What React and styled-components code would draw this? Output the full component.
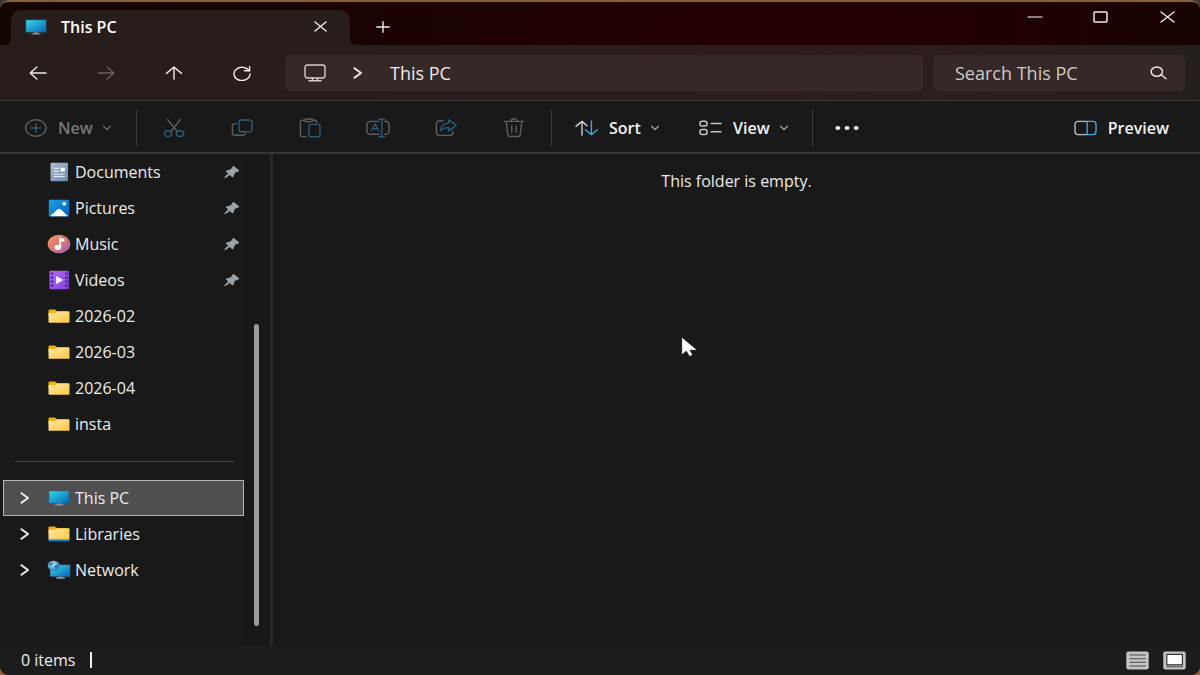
import React from "react";
import styled, { createGlobalStyle } from "styled-components";

const Global = createGlobalStyle`
  * { box-sizing: border-box; }
  body { margin: 0; background: linear-gradient(#3a3634 0%, #3a3634 50%, #8a6038 100%); }
  button, input { font: inherit; color: inherit; border: 0; background: none; padding: 0; margin: 0; }
  svg { display: block; flex: none; }
`;

const Window = styled.div`
  display: flex;
  flex-direction: column;
  min-height: 100vh;
  overflow: hidden;
  border-top: 2px solid #8a6038;
  border-radius: 9px;
  background: #191919;
  color: #ececec;
  font-family: "Open Sans", "Noto Sans", sans-serif;
  font-size: 16px;
  line-height: 20px;
`;

const TitleBar = styled.header`
  display: flex;
  height: 43px;
  padding-left: 11px;
  background: linear-gradient(90deg, #150500 0%, #1b0300 32%, #240002 66%, #1f0100 85%, #170400 100%);
`;

const Tab = styled.div`
  position: relative;
  display: flex;
  align-items: center;
  width: 339px;
  margin-top: 8px;
  padding: 0 20px 2px 14px;
  border-radius: 10px 10px 0 0;
  background: #271d1b;
  font-weight: 600;
  &::before, &::after {
    content: "";
    position: absolute;
    bottom: 0;
    width: 5px;
    height: 5px;
  }
  &::before { right: 100%; background: radial-gradient(circle at 0 0, transparent 4px, #271d1b 5px); }
  &::after { left: 100%; background: radial-gradient(circle at 100% 0, transparent 4px, #271d1b 5px); }
`;

const TabLabel = styled.span`
  flex: 1;
  margin-left: 14px;
  color: #fff;
`;

const TabButton = styled.button`
  display: grid;
  place-items: center;
  width: 20px;
  height: 32px;
`;

const NewTab = styled(TabButton)`
  width: 66px;
  height: 50px;
`;

const WindowButtons = styled.div`
  display: flex;
  margin-left: auto;
`;

const WindowButton = styled.button`
  display: grid;
  place-items: center;
  width: 66px;
  height: 30px;
`;

const NavBar = styled.nav`
  display: flex;
  align-items: center;
  height: 55px;
  padding: 0 15px 0 4px;
  background: linear-gradient(90deg, #271d1b 0%, #291d1c 30%, #301c1d 65%, #2c1e1d 85%, #251f1c 100%);
`;

const NavButton = styled.button`
  display: grid;
  place-items: center;
  width: 68px;
  height: 36px;
  color: ${(p) => (p.disabled ? "#6a615f" : "#eeeaea")};
`;

const Field = styled.div`
  display: flex;
  align-items: center;
  height: 36px;
  border-radius: 5px;
  background: #362827;
  font-size: 18px;
`;

const Address = styled(Field)`
  flex: 1;
  margin: 0 11px 0 9px;
  padding-left: 19px;
  gap: 27px;
`;

const Search = styled(Field)`
  width: 251px;
  padding: 0 18px 0 21px;
  background: #352927;
  input {
    flex: 1;
    min-width: 0;
    outline: 0;
  }
  input::placeholder { color: #cfc8c6; opacity: 1; }
`;

const Toolbar = styled.div`
  display: flex;
  align-items: center;
  height: 54px;
  padding-top: 2px;
  border-top: 1px solid #3d3938;
  border-bottom: 2px solid #353535;
  font-weight: 600;
`;

const Command = styled.button`
  display: flex;
  align-items: center;
  gap: 11px;
  height: 36px;
  width: ${(p) => p.$width}px;
  padding-left: 23px;
  color: ${(p) => (p.disabled ? "#777" : "#f2f2f2")};
`;

const CommandText = styled.span`
  display: flex;
  align-items: center;
  gap: 9px;
`;

const IconCommand = styled.button`
  display: grid;
  place-items: center;
  width: 68px;
  height: 36px;
`;

const Preview = styled(Command)`
  width: auto;
  margin-left: auto;
  padding-right: 31px;
`;

const Divider = styled.span`
  width: 1px;
  height: 36px;
  margin: 0 ${(p) => p.$after || 0}px 0 ${(p) => p.$before || 0}px;
  background: #3b3b3b;
`;

const Body = styled.div`
  display: flex;
  flex: 1;
`;

const Sidebar = styled.aside`
  display: flex;
  width: 273px;
  padding-left: 3px;
  border-right: 3px solid #292929;
`;

const Tree = styled.ul`
  flex: 1;
  margin: 0;
  padding: 0;
  list-style: none;
`;

const Row = styled.a`
  display: flex;
  align-items: center;
  height: 36px;
  padding-right: 3px;
  border: 1px solid ${(p) => (p.$selected ? "#b4b4b4" : "transparent")};
  background: ${(p) => (p.$selected ? "#4f4f4f" : "transparent")};
  color: #ececec;
  text-decoration: none;
`;

const Expander = styled.span`
  display: grid;
  place-items: center;
  width: 41px;
`;

const RowIcon = styled.span`
  display: grid;
  place-items: center;
  width: 24px;
  margin: 0 4px 0 2px;
`;

const RowLabel = styled.span`
  flex: 1;
`;

const Separator = styled.li`
  height: 38px;
  padding: 19px 10px 0 12px;
  &::after {
    content: "";
    display: block;
    height: 1px;
    background: #444;
  }
`;

const ScrollTrack = styled.div`
  display: flex;
  width: 26px;
  padding: 170px 11px 19px 10px;
  background: #181818;
`;

const ScrollThumb = styled.span`
  flex: 1;
  border-radius: 3px;
  background: #9b9b9b;
`;

const Content = styled.main`
  position: relative;
  flex: 1;
  padding-top: 17px;
  text-align: center;
  p { margin: 0; }
`;

const Pointer = styled.svg`
  position: absolute;
  left: 44%;
  top: 182px;
`;

const StatusBar = styled.footer`
  display: flex;
  align-items: center;
  height: 30px;
  padding: 0 14px 0 21px;
  background: #1c1c1c;
`;

const Caret = styled.span`
  width: 2px;
  height: 16px;
  margin-left: 15px;
  background: #eee;
`;

const Views = styled.div`
  display: flex;
  gap: 14px;
  margin-left: auto;
`;

function Svg({ w, h, children, ...rest }) {
  return (
    <svg width={w} height={h} viewBox={`0 0 ${w} ${h}`} fill="none" stroke="currentColor" strokeWidth="1.4"
      strokeLinecap="round" strokeLinejoin="round" aria-hidden="true" {...rest}>
      {children}
    </svg>
  );
}

const Chevron = () => (
  <Svg w={10} h={6} stroke="#a0a0a0" strokeWidth="1.3"><path d="M1.5 1.2 5 4.5l3.5-3.3" /></Svg>
);
const DimChevron = () => (
  <Svg w={10} h={6} stroke="#6a6a6a" strokeWidth="1.3"><path d="M1.5 1.2 5 4.5l3.5-3.3" /></Svg>
);
const ChevronRight = () => (
  <Svg w={10} h={12} strokeWidth="2"><path d="M1.5 1.2 8 6l-6.5 4.8" /></Svg>
);
const Cross = ({ w = 14, h = 12 }) => (
  <Svg w={w} h={h}><path d={`M1 1 ${w - 1} ${h - 1}M${w - 1} 1 1 ${h - 1}`} /></Svg>
);

const HiddenDefs = styled.svg`
  position: absolute;
`;

const Gradients = () => (
  <HiddenDefs width="0" height="0" aria-hidden="true">
    <defs>
      <linearGradient id="screen" x1="0" y1="0" x2="1" y2="1"><stop offset="0" stopColor="#35d6e3" /><stop offset="1" stopColor="#0b66bf" /></linearGradient>
      <linearGradient id="folder" x1="0" y1="0" x2="1" y2="1"><stop offset="0" stopColor="#ffe9a6" /><stop offset="1" stopColor="#fdc63f" /></linearGradient>
      <linearGradient id="doc" x1="0" y1="0" x2="1" y2="1"><stop offset="0" stopColor="#aebfd3" /><stop offset="1" stopColor="#6787ab" /></linearGradient>
      <linearGradient id="pic" x1="0" y1="0" x2="1" y2="1"><stop offset="0" stopColor="#1da1ec" /><stop offset="1" stopColor="#0560b8" /></linearGradient>
      <linearGradient id="music" x1="0" y1="0" x2="1" y2="1"><stop offset="0" stopColor="#f5975a" /><stop offset=".55" stopColor="#d57379" /><stop offset="1" stopColor="#9a5bc4" /></linearGradient>
      <linearGradient id="video" x1="0" y1="0" x2="1" y2="1"><stop offset="0" stopColor="#b56cf0" /><stop offset="1" stopColor="#8040dc" /></linearGradient>
      <radialGradient id="globe" cx=".4" cy=".35" r=".7"><stop offset="0" stopColor="#d8f1fb" /><stop offset=".5" stopColor="#5daad6" /><stop offset="1" stopColor="#2c6f9f" /></radialGradient>
    </defs>
  </HiddenDefs>
);

const PcIcon = () => (
  <Svg w={22} h={16} stroke="none">
    <rect x=".6" y=".4" width="20.8" height="13.2" rx="1" fill="#29617b" />
    <rect x="1.3" y="1.2" width="19.4" height="11.7" fill="url(#screen)" />
    <path d="M8.5 13.6h5v.8h2v1.2h-9v-1.2h2z" fill="#8f9ba3" />
  </Svg>
);
const FolderIcon = () => (
  <Svg w={22} h={16} stroke="none">
    <path d="M.5 2.5a1 1 0 0 1 1-1h5.3l2 1.6H20a1 1 0 0 1 1 1V8H.5z" fill="#f3ae12" />
    <path d="M.5 4.9h6.6l2-1.2H21a.5.5 0 0 1 .5.5v9.8a.8.8 0 0 1-.8.8H1.3a.8.8 0 0 1-.8-.8z" fill="url(#folder)" />
  </Svg>
);
const LibraryIcon = () => (
  <Svg w={22} h={16} stroke="none">
    <path d="M.5 1.5a1 1 0 0 1 1-1h5.3l2 1.4H20a1 1 0 0 1 1 1V8H.5z" fill="#f3ae12" />
    <path d="M.5 3.7h6.6l2-1.2H21a.5.5 0 0 1 .5.5V14H.5z" fill="url(#folder)" />
    <path d="M.5 13.4h21v1.2a.8.8 0 0 1-.8.8H1.3a.8.8 0 0 1-.8-.8z" fill="#1277cf" />
  </Svg>
);
const DocumentIcon = () => (
  <Svg w={22} h={20} stroke="none">
    <rect x="2.5" y=".8" width="17.5" height="18.4" rx="1.3" fill="url(#doc)" />
    <path d="M5.8 6.4h5M5.8 9.4h5M5.8 12.2h11M5.8 14.6h11" stroke="#dfe8f2" strokeWidth="1.1" strokeLinecap="butt" />
    <rect x="12.5" y="5.8" width="4.4" height="3.6" rx=".6" fill="#fff" />
  </Svg>
);
const PictureIcon = () => (
  <Svg w={22} h={20} stroke="none">
    <rect x=".8" y="1.8" width="20.4" height="16.6" rx="1.2" fill="url(#pic)" />
    <path d="M2 18.2 9.8 11.3a2.2 2.2 0 0 1 2.8 0l7.5 6.9z" fill="#fff" />
    <ellipse cx="16.3" cy="5.8" rx="2" ry="1.7" fill="#fff" />
  </Svg>
);
const MusicIcon = () => (
  <Svg w={24} h={20} stroke="none">
    <ellipse cx="12" cy="10" rx="11.3" ry="9.3" fill="url(#music)" />
    <path d="M12.2 13.3V3.6l5.2 1.4v2.9l-3.2-.7v6.5" fill="#fff" />
    <ellipse cx="10.8" cy="13.5" rx="3.4" ry="2.5" fill="#fff" />
  </Svg>
);
const VideoIcon = () => (
  <Svg w={22} h={20} stroke="none">
    <rect x="1.5" y=".8" width="19.4" height="18.4" rx="1.3" fill="url(#video)" />
    <path d="M4 2.5v16M18.6 2.5v16" stroke="#4a1c8e" strokeWidth="2.4" strokeDasharray="2 2" strokeLinecap="butt" />
    <path d="M8.2 6v8l7.2-4z" fill="#fff" />
  </Svg>
);
const NetworkIcon = () => (
  <Svg w={24} h={20} stroke="none">
    <rect x="3" y="4.6" width="20.4" height="12.2" rx="1" fill="#29617b" />
    <rect x="3.6" y="5.2" width="19.2" height="11" fill="url(#screen)" />
    <path d="M11 16.8h5v.8h2v1.2H9v-1.2h2z" fill="#8f9ba3" />
    <ellipse cx="6.8" cy="5.8" rx="6" ry="5" fill="url(#globe)" />
    <path d="M2.5 3.2 5 2.4l1.5 1.4-1.8 1.6-2.4.1zM7.3 5.8l2.8-1.3 1.6 1.8-1.8 2.8-1.8-.8z" fill="#2e7cae" />
  </Svg>
);
const PinIcon = () => (
  <Svg w={16} h={14} stroke="none">
    <path d="M8.8 1.3a1 1 0 0 1 1.3 0l4.6 3.6a.9.9 0 0 1-.3 1.6l-3.4 1.2-1.5 3.9a.9.9 0 0 1-1.5.3L5.7 9.9 2 12.7l-1.7.5.5-1.5L4.2 8.5 2.2 6.7a.8.8 0 0 1 .3-1.3l4.4-1.2z" fill="#98a2a8" />
  </Svg>
);

const BLUE = "#285c7a";
const GRAY = "#5f5f5f";

const CutIcon = () => (
  <Svg w={22} h={20} stroke={GRAY}>
    <path d="M4.5 1.5 14.5 13.7M17.5 1.5 7.5 13.7" />
    <ellipse cx="5" cy="15.6" rx="3.6" ry="2.9" stroke={BLUE} /><ellipse cx="17" cy="15.6" rx="3.6" ry="2.9" stroke={BLUE} />
  </Svg>
);
const CopyIcon = () => (
  <Svg w={22} h={20} stroke={GRAY}>
    <path d="M5.3 5.6H4a2.6 2.6 0 0 0-2.6 2.6v6.5A2.6 2.6 0 0 0 4 17.3h7.6a2.8 2.8 0 0 0 2.7-1.8" />
    <rect x="8" y="2" width="13" height="11.8" rx="2.4" stroke={BLUE} />
  </Svg>
);
const PasteIcon = () => (
  <Svg w={22} h={20} stroke={GRAY}>
    <path d="M7 18.6H3.2a1.8 1.8 0 0 1-1.8-1.8V4.1a1.8 1.8 0 0 1 1.8-1.8H6M13.5 2.3h2.3a1.8 1.8 0 0 1 1.8 1.8v.6" />
    <rect x="6" y="1" width="7.6" height="2.6" rx="1.3" />
    <rect x="10" y="6.4" width="11" height="12.4" rx="1.6" stroke={BLUE} />
  </Svg>
);
const RenameIcon = () => (
  <Svg w={24} h={20} stroke={GRAY}>
    <path d="M13 16.3H4.3A3.2 3.2 0 0 1 1 13.1V6.6a3.2 3.2 0 0 1 3.3-3.2H13M18.8 3.4a3.2 3.2 0 0 1 4.2 3.2v6.5a3.2 3.2 0 0 1-4.2 3.2" />
    <path d="m5.2 13 3.9-7 3.9 7M6.5 10.8h5.2M13 1.2h5.6M15.9 1.2v17.6M13 18.8h5.6" stroke={BLUE} />
  </Svg>
);
const ShareIcon = () => (
  <Svg w={22} h={20} stroke={GRAY}>
    <path d="M8 3H4.2a2.8 2.8 0 0 0-2.8 2.8v8.8a2.8 2.8 0 0 0 2.8 2.8h11a2.8 2.8 0 0 0 2.8-2.8v-1.4" />
    <path d="M13.8 1.8v3.1C8.6 5.3 6 8.4 5.4 12.7c2-2.1 4.6-3.2 8.4-3.1v3.3l7.5-5.5z" stroke={BLUE} />
  </Svg>
);
const TrashIcon = () => (
  <Svg w={22} h={20} stroke={GRAY}>
    <path d="M1.4 3.4h19.2M8 3.2a3 2.4 0 0 1 6 0M3.2 3.6l1.6 13.1a2 2 0 0 0 2 1.8h8.4a2 2 0 0 0 2-1.8l1.6-13.1M8.8 8v6.5M13.2 8v6.5" />
  </Svg>
);

const fileCommands = [
  ["Cut", CutIcon],
  ["Copy", CopyIcon],
  ["Paste", PasteIcon],
  ["Rename", RenameIcon],
  ["Share", ShareIcon],
  ["Delete", TrashIcon],
];

const pinned = [
  ["Documents", DocumentIcon, true],
  ["Pictures", PictureIcon, true],
  ["Music", MusicIcon, true],
  ["Videos", VideoIcon, true],
  ["2026-02", FolderIcon],
  ["2026-03", FolderIcon],
  ["2026-04", FolderIcon],
  ["insta", FolderIcon],
];

const places = [
  ["This PC", PcIcon],
  ["Libraries", LibraryIcon],
  ["Network", NetworkIcon],
];

function TreeItem({ label, icon: Icon, pin, expandable, selected }) {
  return (
    <li>
      <Row href="#" $selected={selected} aria-current={selected ? "page" : undefined}>
        <Expander>{expandable && <ChevronRight />}</Expander>
        <RowIcon><Icon /></RowIcon>
        <RowLabel>{label}</RowLabel>
        {pin && <PinIcon />}
      </Row>
    </li>
  );
}

function ViewButton({ label, children }) {
  return (
    <button aria-label={label}>
      <Svg w={23} h={19} strokeLinecap="butt" strokeLinejoin="miter">
        <rect x=".3" y=".6" width="22.4" height="17.8" rx="2" fill="#c4c4c4" stroke="none" />
        {children}
      </Svg>
    </button>
  );
}

export default function App() {
  return (
    <Window>
      <Global />
      <Gradients />
      <TitleBar>
        <Tab>
          <PcIcon />
          <TabLabel>This PC</TabLabel>
          <TabButton aria-label="Close tab"><Cross w={13} h={11} /></TabButton>
        </Tab>
        <NewTab aria-label="New tab">
          <Svg w={14} h={12}><path d="M.8 6h12.4M7 .8v10.4" /></Svg>
        </NewTab>
        <WindowButtons>
          <WindowButton aria-label="Minimize"><Svg w={16} h={12} stroke="#b5aaa8"><path d="M1 6h14" /></Svg></WindowButton>
          <WindowButton aria-label="Maximize"><Svg w={16} h={12} strokeWidth="1.5"><rect x="1" y=".9" width="13" height="10.2" rx="1" /></Svg></WindowButton>
          <WindowButton aria-label="Close"><Cross w={15} h={12} /></WindowButton>
        </WindowButtons>
      </TitleBar>

      <NavBar aria-label="Navigation">
        <NavButton aria-label="Back"><Svg w={18} h={14}><path d="M17 7H1.2M7.8 1 1.2 7l6.6 6" /></Svg></NavButton>
        <NavButton aria-label="Forward" disabled><Svg w={18} h={14}><path d="M1 7h15.8M10.2 1l6.6 6-6.6 6" /></Svg></NavButton>
        <NavButton aria-label="Up"><Svg w={18} h={14}><path d="M9 13.2V1M1.5 7.4 9 1l7.5 6.4" /></Svg></NavButton>
        <NavButton aria-label="Refresh">
          <Svg w={20} h={16}><path d="M17.3 6.2A8 6.6 0 1 0 18 9M17.6 1.4v4.4h-5.2" /></Svg>
        </NavButton>
        <Address>
          <Svg w={22} h={18} stroke="#d6d0cf">
            <rect x="1" y="1" width="20" height="13" rx="2.4" />
            <path d="M8.5 14v2.6M13.5 14v2.6M5 16.8h12" />
          </Svg>
          <ChevronRight />
          <span>This PC</span>
        </Address>
        <Search>
          <input type="text" placeholder="Search This PC" aria-label="Search This PC" />
          <Svg w={17} h={14}><ellipse cx="6.8" cy="5.6" rx="5.7" ry="4.6" /><path d="m11.2 8.8 4.8 4" /></Svg>
        </Search>
      </NavBar>

      <Toolbar role="toolbar" aria-label="Commands">
        <Command $width={136} disabled>
          <Svg w={24} h={20} stroke={GRAY}>
            <ellipse cx="12.8" cy="10" rx="10.2" ry="8.2" />
            <path d="M8.2 10h9.2M12.8 6v8" stroke={BLUE} strokeWidth="1.6" />
          </Svg>
          <CommandText>New <DimChevron /></CommandText>
        </Command>
        <Divider $after={3} />
        {fileCommands.map(([label, Icon]) => (
          <IconCommand key={label} aria-label={label} disabled><Icon /></IconCommand>
        ))}
        <Divider $before={3} />
        <Command $width={124}>
          <Svg w={23} h={16} stroke="#d0d0d0">
            <path d="M7 15V1.4M1 6.4l6-5 5 4.4" />
            <path d="M16.4 1v13.4M10.4 9.8l6 4.8 6-4.8" stroke="#3ea6e0" />
          </Svg>
          <CommandText>Sort <Chevron /></CommandText>
        </Command>
        <Command $width={136}>
          <Svg w={23} h={16} stroke="#c4c4c4" strokeWidth="1.5">
            <rect x="1" y="1.2" width="7" height="4.8" rx="2" /><rect x="1" y="9.6" width="7" height="4.8" rx="2" />
            <path d="M12.2 3.4H22M12.2 11.8H22" />
          </Svg>
          <CommandText>View <Chevron /></CommandText>
        </Command>
        <Divider />
        <IconCommand aria-label="More">
          <Svg w={24} h={6} stroke="none" fill="#f2f2f2"><ellipse cx="2.8" cy="3" rx="2.5" ry="2" /><ellipse cx="12" cy="3" rx="2.5" ry="2" /><ellipse cx="21.2" cy="3" rx="2.5" ry="2" /></Svg>
        </IconCommand>
        <Preview>
          <Svg w={23} h={16} stroke="#bdbdbd">
            <path d="M13.2 1.4H4a3 3 0 0 0-3 3v7.2a3 3 0 0 0 3 3h9.2" />
            <path d="M13.2 1.4h5.8a3 3 0 0 1 3 3v7.2a3 3 0 0 1-3 3h-5.8z" stroke="#3ea6e0" />
          </Svg>
          Preview
        </Preview>
      </Toolbar>

      <Body>
        <Sidebar>
          <Tree>
            {pinned.map(([label, icon, pin]) => <TreeItem key={label} label={label} icon={icon} pin={pin} />)}
            <Separator role="separator" />
            {places.map(([label, icon], i) => (
              <TreeItem key={label} label={label} icon={icon} expandable selected={i === 0} />
            ))}
          </Tree>
          <ScrollTrack><ScrollThumb /></ScrollTrack>
        </Sidebar>
        <Content>
          <p>This folder is empty.</p>
          <Pointer width="18" height="22" viewBox="0 0 18 22" aria-hidden="true">
            <path d="M.7 1v18l4.6-3.8 3.2 5.4 3.4-1.5-2.8-4.8h7.4z" fill="#fff" stroke="#111" strokeWidth=".8" />
          </Pointer>
        </Content>
      </Body>

      <StatusBar>
        <span>0 items</span>
        <Caret />
        <Views>
          <ViewButton label="Details view">
            <path d="M3.4 4h16.4M3.4 7.7h16.4M3.4 11.3h16.4M3.4 15h16.4" stroke="#4a4a4a" strokeWidth="1.1" />
          </ViewButton>
          <ViewButton label="Large icons view">
            <rect x="3.8" y="3.4" width="15.6" height="10.4" fill="#fff" stroke="#333" strokeWidth="1.2" />
            <path d="M3.2 15.8h16.8" stroke="#4a4a4a" strokeWidth="1.1" />
          </ViewButton>
        </Views>
      </StatusBar>
    </Window>
  );
}
